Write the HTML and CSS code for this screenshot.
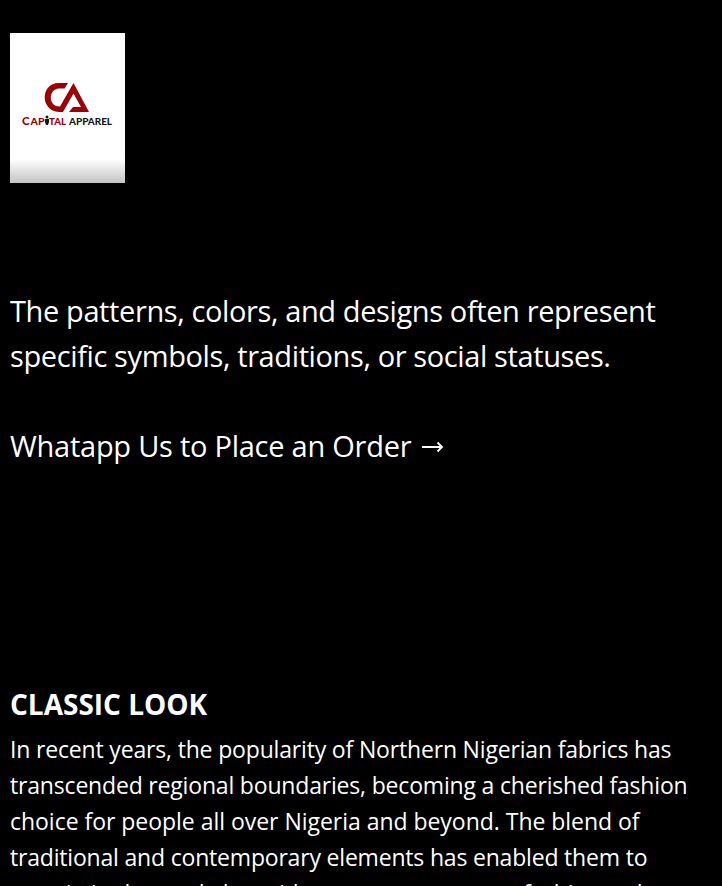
FILE: index.html
```html
<!DOCTYPE html>
<html lang="en">
<head>
<meta charset="utf-8">
<title>Capital Apparel</title>
<link rel="stylesheet" href="styles.css">
</head>
<body>
<header class="brand">
<svg class="logo" width="115" height="150" viewBox="0 0 115 150" role="img" aria-label="Capital Apparel">
<defs><linearGradient id="fade" x1="0" y1="0" x2="0" y2="1"><stop offset="0" stop-color="#fff"/><stop offset=".84" stop-color="#fff"/><stop offset="1" stop-color="#c4c4c4"/></linearGradient></defs>
<rect width="115" height="150" fill="url(#fade)"/>
<path fill="#9c0006" d="M58 50H49C30 50 30 78 49 79H53L63.500 60.500L71 74H63L59 79H79L63.500 50L50 73.500C38 74 38 56 49 55.500H54.500Z"/>
<g class="logo-name"><text x="12" y="92" fill="#9c0006" font-size="11.500">C</text><text x="20.500" y="92" fill="#9c0006" font-size="9.500" textLength="14" lengthAdjust="spacingAndGlyphs">AP</text><text x="39" y="92" fill="#9c0006" font-size="9.500" textLength="17" lengthAdjust="spacingAndGlyphs">TAL</text><text x="59" y="92" fill="#171717" font-size="9.500" textLength="43" lengthAdjust="spacingAndGlyphs">APPAREL</text></g>
<circle cx="37" cy="84" r="1.500" fill="#171717"/><path fill="#171717" d="M35 86H39V89L38 92H36L35 89Z"/>
</svg>
</header>
<main>
<section class="intro">
<p class="lead"><span class="l1">The patterns, colors, and designs often represent</span><br><span class="l2">specific symbols, traditions, or social statuses.</span></p>
<a class="order"><span class="l3">Whatapp Us to Place an Order</span><svg class="arrow" width="22" height="12" viewBox="0 0 22 12"><path d="M0 6H20M15.500 1.500L20 6L15.500 10.500" fill="none" stroke="#fff" stroke-width="1.800"/></svg></a>
</section>
<section class="feature">
<h2>CLASSIC LOOK</h2>
<p class="story"><span class="s1">In recent years, the popularity of Northern Nigerian fabrics has</span><br><span class="s2">transcended regional boundaries, becoming a cherished fashion</span><br><span class="s3">choice for people all over Nigeria and beyond. The blend of</span><br><span class="s4">traditional and contemporary elements has enabled them to</span><br><span class="s5">remain in demand alongside new contemporary fashion styles</span></p>
</section>
</main>
</body>
</html>
```

FILE: styles.css
```css
* { box-sizing: border-box; }
body { margin: 0; height: 886px; overflow: hidden; padding: 33px 10px 0; background: #000; color: #fff; font-family: "Open Sans", "Noto Sans", sans-serif; white-space: nowrap; }
p, h2 { margin: 0; }
.brand { height: 255px; }
.logo { display: block; }
.logo-name { font-family: Lato, sans-serif; font-weight: 900; }
.intro { height: 394px; font-size: 29px; line-height: 45px; }
.lead { margin-bottom: 45px; }
.order { display: flex; align-items: center; gap: 11px; }
.arrow { margin-top: 3px; }
.l1, .l2 { letter-spacing: -0.385px; }
.l3 { letter-spacing: -0.25px; }
h2 { font-size: 28px; line-height: 45px; font-weight: 700; }
.story { margin-top: 4px; font-size: 23px; line-height: 36px; }
.s1 { letter-spacing: -0.17px; }
.s2 { letter-spacing: -0.18px; }
.s3 { letter-spacing: -0.03px; }
.s4, .s5 { letter-spacing: -0.19px; }
```
